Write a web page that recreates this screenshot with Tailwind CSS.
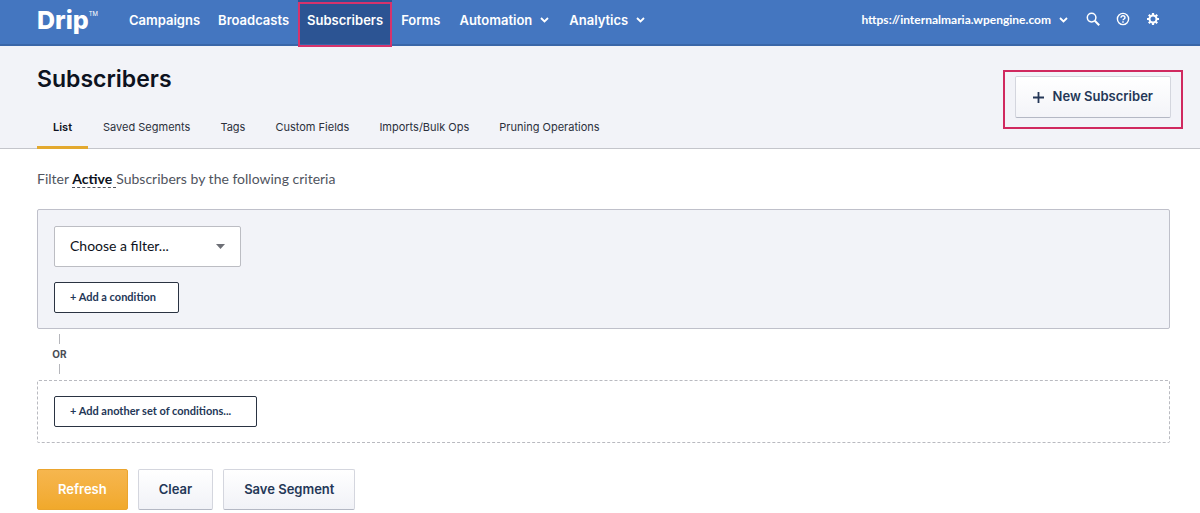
<!DOCTYPE html>
<html lang="en">
<head>
  <meta charset="UTF-8">
  <meta name="viewport" content="width=device-width, initial-scale=1.0">
  <title>Subscribers - Drip</title>
  <script src="https://cdn.jsdelivr.net/npm/@tailwindcss/browser@4"></script>
</head>
<body class="bg-white font-['Inter','Liberation_Sans',sans-serif] text-[#0d1220]">

  <header class="flex h-[46px] items-start border-b-2 border-[#3a66a8] bg-[#4476c0] pl-[37px] pr-10 text-white">
    <a href="#" class="flex h-10 w-[83px] shrink-0 items-start pt-1 text-[25px] leading-8 font-extrabold">Drip<span class="pt-1 text-[6px] leading-3 font-normal">TM</span></a>

    <nav class="flex text-[13px] leading-10 font-semibold">
      <a href="#" class="px-[9px]">Campaigns</a>
      <a href="#" class="px-[9px]">Broadcasts</a>
      <a href="#" class="relative h-11 bg-[#2c5493] px-[9px]">Subscribers
        <span class="absolute inset-x-0 top-[2px] -bottom-[3px] border-2 border-[#d6336c]"></span>
      </a>
      <a href="#" class="px-[9px]">Forms</a>
      <a href="#" class="flex h-10 items-center gap-2 px-[10px]">Automation
        <svg class="h-[6px] w-[9px]" viewBox="0 0 9 6" fill="none" stroke="currentColor" stroke-width="1.8"><path d="M1 1l3.500 3.500L8 1"/></svg>
      </a>
      <a href="#" class="flex h-10 items-center gap-2 px-[10px]">Analytics
        <svg class="h-[6px] w-[9px]" viewBox="0 0 9 6" fill="none" stroke="currentColor" stroke-width="1.8"><path d="M1 1l3.500 3.500L8 1"/></svg>
      </a>
    </nav>

    <div class="ml-auto flex h-10 items-center">
      <a href="#" class="flex items-center gap-2 font-['Lato',sans-serif] text-[12px] font-bold">https://internalmaria.wpengine.com
        <svg class="h-[6px] w-[9px]" viewBox="0 0 9 6" fill="none" stroke="currentColor" stroke-width="1.8"><path d="M1 1l3.500 3.500L8 1"/></svg>
      </a>
      <div class="ml-[18px] flex items-center gap-4 pb-[2px]">
        <a href="#" aria-label="Search">
          <svg class="size-[14px]" viewBox="0 0 14 14" fill="none" stroke="currentColor"><circle cx="5.600" cy="5.600" r="4.300" stroke-width="1.500"/><path d="M8.800 8.800l4.400 4.400" stroke-width="2"/></svg>
        </a>
        <a href="#" aria-label="Help">
          <svg class="size-[14px]" viewBox="0 0 14 14" fill="none" stroke="currentColor"><circle cx="7" cy="7" r="5.600" stroke-width="1.400"/><path d="M5 5.700c0-2.600 4-2.500 4 0 0 1.300-2 1.300-2 2.600" stroke-width="1.400"/><path d="M7 9.300v1.400" stroke-width="1.500"/></svg>
        </a>
        <a href="#" aria-label="Settings">
          <svg class="size-[14px]" viewBox="0 0 14 14" fill="none" stroke="currentColor"><circle cx="7" cy="7" r="3.500" stroke-width="2"/><path d="M7 1v2M7 11v2M1 7h2M11 7h2M2.800 2.800l1.400 1.400M9.800 9.800l1.400 1.400M2.800 11.200l1.400-1.400M9.800 4.200l1.400-1.400" stroke-width="2.200"/></svg>
        </a>
      </div>
    </div>
  </header>

  <section class="flex justify-between border-b border-[#c4c5cb] bg-[#f2f3f8] pl-[37px] pr-[17px]">
    <div>
      <h1 class="pt-[17px] text-[23px] leading-8 font-semibold">Subscribers</h1>
      <!-- section tabs -->
      <nav class="-mb-px mt-[13px] flex text-[11px] leading-[38px] text-[#2b303c]">
        <a href="#" class="border-b-3 border-[#e3a92f] px-4 font-semibold text-[#0d1220]">List</a>
        <a href="#" class="px-[15px]">Saved Segments</a>
        <a href="#" class="px-[15px]">Tags</a>
        <a href="#" class="px-[15px]">Custom Fields</a>
        <a href="#" class="px-[15px]">Imports/Bulk Ops</a>
        <a href="#" class="px-[15px]">Pruning Operations</a>
      </nav>
    </div>
    <div class="mt-6 flex h-[59px] border-2 border-[#d0295f] px-[10px] pt-1">
      <button type="button" class="flex h-[42px] items-center gap-[9px] rounded-xs border border-[#d4d6de] border-b-[#b4b8c4] bg-linear-to-b from-white to-[#f3f4f8] px-[17px] text-[13px] font-semibold text-[#243757]">
        <svg class="size-[11px]" viewBox="0 0 11 11" stroke="currentColor" stroke-width="1.800"><path d="M5.500 0v11M0 5.500h11"/></svg>
        New Subscriber
      </button>
    </div>
  </section>

  <main class="pl-[37px] pr-[30px] pt-5">
    <p class="font-['Lato',sans-serif] text-[14px] leading-5 text-[#50545e]">Filter <a href="#" class="border-b border-dashed border-[#50545e] pr-1 font-bold text-[#0d1220]">Active</a>Subscribers by the following criteria</p>

    <div class="mt-5 h-[120px] rounded-xs border border-[#bfc0ca] bg-[#f2f3f8] px-4 pt-4">
      <div class="relative w-[187px]">
        <select aria-label="Filter" class="block h-[41px] w-full appearance-none rounded-xs border border-[#bcbdc3] bg-white px-[15px] pb-[2px] font-['Lato',sans-serif] text-[14px]">
          <option>Choose a filter...</option>
        </select>
        <svg class="pointer-events-none absolute top-[18px] right-4 h-[5px] w-[9px]" viewBox="0 0 9 5" fill="#6d6f76"><path d="M0 0h9L4.500 5z"/></svg>
      </div>
      <button type="button" class="mt-[15px] flex h-[31px] w-[125px] items-center rounded-xs border border-[#2a3342] bg-white px-[15px] font-['Lato',sans-serif] text-[11px] font-bold whitespace-nowrap text-[#243757]">+ Add a condition</button>
    </div>

    <div class="ml-3 flex h-[51px] w-[21px] flex-col items-center gap-[3px] pt-[5px] text-[10px] leading-[14px] font-bold text-[#4a4d55]">
      <span class="h-[10px] w-px bg-[#b5b6bb]"></span>
      OR
      <span class="h-[10px] w-px bg-[#b5b6bb]"></span>
    </div>

    <div class="h-[63px] rounded-xs border border-dashed border-[#b9bac0] px-4 pt-[15px]">
      <button type="button" class="flex h-[31px] w-[203px] items-center rounded-xs border border-[#2a3342] bg-white px-[15px] font-['Lato',sans-serif] text-[11px] font-bold whitespace-nowrap text-[#243757]">+ Add another set of conditions...</button>
    </div>

    <div class="mt-[26px] flex gap-[10px] text-[13px] font-semibold text-[#243757]">
      <button type="button" class="h-[41px] rounded-xs border border-[#eba52e] bg-linear-to-b from-[#f6b64e] to-[#f1a92b] px-5 text-white">Refresh</button>
      <button type="button" class="h-[41px] rounded-xs border border-[#d4d6de] border-b-[#b4b8c4] bg-linear-to-b from-white to-[#f1f2f7] px-5">Clear</button>
      <button type="button" class="h-[41px] rounded-xs border border-[#d4d6de] border-b-[#b4b8c4] bg-linear-to-b from-white to-[#f1f2f7] px-5">Save Segment</button>
    </div>
  </main>

</body>
</html>
